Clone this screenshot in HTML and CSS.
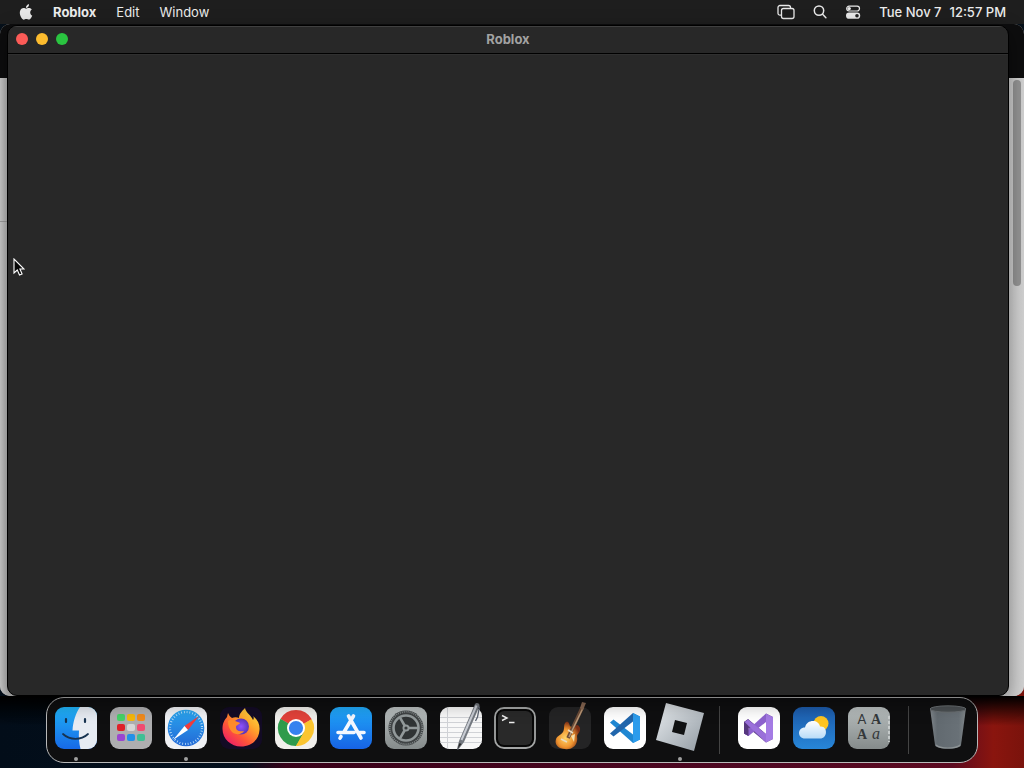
FILE: index.html
```
<!DOCTYPE html>
<html lang="en">
<head>
    <meta charset="UTF-8">
    <meta name="viewport" content="width=device-width, initial-scale=1.0">
    <title>Roblox</title>
    <link rel="stylesheet" href="styles.css">
</head>
<body>
    <header class="menubar">
        <nav class="menus">
            <button class="apple" aria-label="Apple menu">
                <svg width="14" height="16" viewBox="0 0 22 24"><path fill="#e8e8e8" d="M11.152 6.896c-.948 0-2.415-1.078-3.96-1.04-2.04.027-3.91 1.183-4.961 3.014-2.117 3.675-.546 9.103 1.519 12.09 1.013 1.454 2.208 3.09 3.792 3.039 1.52-.065 2.09-.987 3.935-.987 1.831 0 2.35.987 3.96.948 1.637-.026 2.676-1.48 3.676-2.948 1.156-1.688 1.636-3.325 1.662-3.415-.039-.013-3.182-1.221-3.22-4.857-.026-3.04 2.48-4.494 2.597-4.559-1.429-2.09-3.623-2.324-4.39-2.376-2-.156-3.675 1.09-4.61 1.09zM14.53 3.83c.843-1.012 1.4-2.427 1.245-3.83-1.207.052-2.662.805-3.532 1.818-.78.896-1.454 2.338-1.273 3.714 1.338.104 2.715-.688 3.56-1.702z"/></svg>
            </button>
            <button class="app-name">Roblox</button>
            <button>Edit</button>
            <button>Window</button>
        </nav>
        <div class="status">
            <button aria-label="Screen mirroring">
                <svg width="18" height="16" viewBox="0 0 18 16" fill="none" stroke="#e8e8e8" stroke-width="1.3"><path d="M4 11.2H3a2 2 0 0 1-2-2V3.500a2 2 0 0 1 2-2h8.500a2 2 0 0 1 2 2V4"/><rect x="4.500" y="4.500" width="12.500" height="10" rx="2"/></svg>
            </button>
            <button aria-label="Search">
                <svg width="14" height="16" viewBox="0 0 14 16" fill="none" stroke="#e8e8e8" stroke-width="1.5" stroke-linecap="round"><circle cx="6" cy="6.6" r="4.7"/><path d="M9.6 10.3l3.3 3.5"/></svg>
            </button>
            <button aria-label="Control Center">
                <svg width="16" height="16" viewBox="0 0 16 16"><rect x="1.7" y="2.2" width="12.8" height="4.8" rx="2.4" fill="none" stroke="#e8e8e8" stroke-width="1.2"/><circle cx="4.2" cy="4.6" r="1.7" fill="#e8e8e8"/><rect x="1" y="8.6" width="14.2" height="6.2" rx="3.1" fill="#e8e8e8"/><circle cx="12" cy="11.7" r="1.8" fill="#222"/></svg>
            </button>
            <button class="clock"><span>Tue Nov 7</span><span>12:57 PM</span></button>
        </div>
    </header>

    <main class="desktop">
        <div class="back-window">
            <div class="back-toolbar"></div>
            <div class="back-content"><div class="back-section"></div><div class="scroll-thumb"></div></div>
        </div>
        <section class="window" aria-labelledby="window-title">
            <div class="titlebar">
                <div class="lights">
                    <button class="light close" aria-label="Close"></button>
                    <button class="light minimize" aria-label="Minimize"></button>
                    <button class="light zoom" aria-label="Zoom"></button>
                </div>
                <h1 id="window-title">Roblox</h1>
            </div>
            <div class="window-content"></div>
        </section>
        <svg class="cursor" width="12" height="18" viewBox="0 0 12 18"><path d="M1 1v14l3.3-3 2.2 5 2.6-1.1-2.2-4.9H11z" fill="#080808" stroke="#fff" stroke-width="1.1"/></svg>
    </main>

    <footer class="dock-area">
        <nav class="dock" aria-label="Dock">
            <button class="dock-item running" aria-label="Finder">
                <svg viewBox="0 0 48 48">
                    <defs>
                        <linearGradient id="finder-blue" x2="0" y2="1"><stop stop-color="#20b3f7"/><stop offset="1" stop-color="#1769e6"/></linearGradient>
                        <clipPath id="tile"><rect x="3" y="3" width="42" height="42" rx="9"/></clipPath>
                    </defs>
                    <g clip-path="url(#tile)">
                        <path fill="url(#finder-blue)" d="M3 3h42v42H3z"/>
                        <path fill="#e6ebf2" d="M28 3c-4 6-7 14-7.500 23.500H27C26.500 33 27 39 28.500 45H45V3z"/>
                        <path d="M14 15v3M33 15v3" stroke="#173350" stroke-width="2.200" stroke-linecap="round"/>
                        <path d="M11 30c7 6.500 18 6.500 25 0" fill="none" stroke="#173350" stroke-width="1.800" stroke-linecap="round"/>
                    </g>
                </svg>
            </button>
            <button class="dock-item" aria-label="Launchpad">
                <svg viewBox="0 0 48 48">
                    <rect x="3" y="3" width="42" height="42" rx="9" fill="#aeaeb0"/>
                    <g>
                        <rect x="10" y="10" width="8" height="7" rx="2" fill="#45d267"/><rect x="20" y="10" width="8" height="7" rx="2" fill="#f5b70c"/><rect x="30" y="10" width="8" height="7" rx="2" fill="#f08a1c"/>
                        <rect x="10" y="20" width="8" height="7" rx="2" fill="#df2029"/><rect x="20" y="20" width="8" height="7" rx="2" fill="#d6d6d6"/><rect x="30" y="20" width="8" height="7" rx="2" fill="#f04b70"/>
                        <rect x="10" y="30" width="8" height="7" rx="2" fill="#9a46d0"/><rect x="20" y="30" width="8" height="7" rx="2" fill="#2290e8"/><rect x="30" y="30" width="8" height="7" rx="2" fill="#3dbf94"/>
                    </g>
                </svg>
            </button>
            <button class="dock-item running" aria-label="Safari">
                <svg viewBox="0 0 48 48">
                    <defs><linearGradient id="safari-blue" x2="0" y2="1"><stop stop-color="#2aa6ef"/><stop offset="1" stop-color="#2369d6"/></linearGradient></defs>
                    <rect x="3" y="3" width="42" height="42" rx="9" fill="#f0f1f4"/>
                    <circle cx="24" cy="24" r="18.300" fill="url(#safari-blue)"/>
                    <circle cx="24" cy="24" r="16" fill="none" stroke="#c3e3fa" stroke-width="2.200" stroke-dasharray=".8 2"/>
                    <path fill="#f03c3c" d="M37 12L22.500 22l3.500 4z"/>
                    <path fill="#fff" d="M11 36l11.500-14 3.500 4z"/>
                </svg>
            </button>
            <button class="dock-item" aria-label="Firefox">
                <svg viewBox="0 0 48 48">
                    <defs>
                        <linearGradient id="fox" x1="1" y1="0" x2=".2" y2="1"><stop stop-color="#fff04a"/><stop offset=".4" stop-color="#ffa52b"/><stop offset=".7" stop-color="#ff5538"/><stop offset="1" stop-color="#ec1a6b"/></linearGradient>
                        <radialGradient id="globe"><stop stop-color="#8f53ff"/><stop offset="1" stop-color="#5a35b5"/></radialGradient>
                    </defs>
                    <rect x="3" y="3" width="42" height="42" rx="9" fill="#130b25"/>
                    <path fill="url(#fox)" d="M28 4c1 5 6 7 8 12 1-1 1-3 0-4 5 4 7 9 6.500 14C42 36 34 42.500 24 42.500S5.500 35 5.500 25c0-6 2-9 4.500-12l1-4c1 2 2 4 4 5 2-1 5-1 7 0 0-4 3-7 6-10z"/>
                    <circle cx="24" cy="22.500" r="8" fill="url(#globe)"/>
                    <path fill="#ff8b2b" d="M11 17c3-2 5-2 7 0 2 1 4 1 5 2-1 2-4 2-4 4 0 4 4 5 8 4-2 4-9 4-12 1-3-3-4-7-4-11z"/>
                </svg>
            </button>
            <button class="dock-item" aria-label="Chrome">
                <svg viewBox="0 0 48 48">
                    <rect x="3" y="3" width="42" height="42" rx="9" fill="#f1f0ec"/>
                    <path fill="#e2423a" d="M24 24L8.400 15A18 18 0 0 1 39.600 15z"/>
                    <path fill="#2f9b4c" d="M24 24v18A18 18 0 0 1 8.400 15z"/>
                    <path fill="#fbc530" d="M24 24l15.600-9A18 18 0 0 1 24 42z"/>
                    <path fill="#e2423a" d="M24 15h15.600L24 24z"/>
                    <path fill="#2f9b4c" d="M8.400 15l7.800 13.500L24 24z"/>
                    <path fill="#fbc530" d="M24 42l7.800-13.500L24 24z"/>
                    <path fill="#2f9b4c" d="M16.200 28.500L24 42l7.800-13.500z"/>
                    <path fill="#fbc530" d="M31.800 28.500L24 42h2l12-10V20z"/>
                    <circle cx="24" cy="24" r="9" fill="#fff"/><circle cx="24" cy="24" r="7.100" fill="#3682ef"/>
                </svg>
            </button>
            <button class="dock-item" aria-label="App Store">
                <svg viewBox="0 0 48 48">
                    <defs><linearGradient id="store-blue" x2="0" y2="1"><stop stop-color="#20a9f8"/><stop offset="1" stop-color="#1763e5"/></linearGradient></defs>
                    <rect x="3" y="3" width="42" height="42" rx="9" fill="url(#store-blue)"/>
                    <path d="M21.500 12l12.500 22M26.500 12L17 28M14 32.500L13 34.200M11 28.500h16M32.500 28.500H37" fill="none" stroke="#f4f8ff" stroke-width="3.600" stroke-linecap="round"/>
                </svg>
            </button>
            <button class="dock-item" aria-label="System Settings">
                <svg viewBox="0 0 48 48">
                    <defs><linearGradient id="silver" x2="0" y2="1"><stop stop-color="#b9bfbf"/><stop offset="1" stop-color="#858b8b"/></linearGradient></defs>
                    <rect x="3" y="3" width="42" height="42" rx="9" fill="url(#silver)"/>
                    <circle cx="24" cy="24" r="17.500" fill="#3f4344"/>
                    <circle cx="24" cy="24" r="16.300" fill="none" stroke="#858b8c" stroke-width="1.800" stroke-dasharray="1 1"/>
                    <circle cx="24" cy="24" r="12.500" fill="#303435" stroke="#92999a" stroke-width="2.600"/>
                    <path d="M24 24h12M24 24l-6-10.400M24 24l-6 10.400" stroke="#92999a" stroke-width="2.600"/>
                    <circle cx="24" cy="24" r="3.500" fill="#92999a"/><circle cx="24" cy="24" r="1.600" fill="#363a3b"/>
                </svg>
            </button>
            <button class="dock-item" aria-label="TextEdit">
                <svg viewBox="0 0 48 48">
                    <rect x="3" y="3" width="42" height="42" rx="9" fill="#f8f8f8"/>
                    <g clip-path="url(#tile)"><path d="M3 13.500h42M3 18.500h42M3 23.500h42M3 28.500h42M3 33.500h42M3 38.500h42M10.500 3v42" stroke="#d0d2d6"/></g>
                    <path fill="#747980" d="M38 0c1.500-2 5-.5 4.500 2L27 38l-6 8-1-1 2-8z"/>
                    <path d="M39.500 1.500L24.500 36" stroke="#c9cdd4" stroke-width="2"/>
                    <path d="M42.500 2.500L40.500 13l-2 4" fill="none" stroke="#5d6573" stroke-width="1.300"/>
                    <path fill="#292929" d="M22.500 39l2 1-4 5z"/>
                </svg>
            </button>
            <button class="dock-item" aria-label="Terminal">
                <svg viewBox="0 0 48 48">
                    <rect x="4" y="4" width="40" height="40" rx="9" fill="#070707" stroke="#a4a6a6" stroke-width="1.800"/>
                    <rect x="7" y="7" width="34" height="34" rx="6" fill="#292929"/>
                    <path d="M11 11.500l5 2.500-5 2.500M18 18.500h5.500" fill="none" stroke="#eee" stroke-width="1.400"/>
                </svg>
            </button>
            <button class="dock-item" aria-label="GarageBand">
                <svg viewBox="0 0 48 48">
                    <defs><radialGradient id="guitar" cx=".4" cy=".6" r=".6"><stop stop-color="#ffd66a"/><stop offset=".55" stop-color="#ee932f"/><stop offset="1" stop-color="#7c2d14"/></radialGradient></defs>
                    <rect x="3" y="3" width="42" height="42" rx="9" fill="#242425"/>
                    <path fill="url(#guitar)" d="M20 18c3-1 3 2 4 4 2 2 5 0 7-1 4 1 4 6 1 9-2 2 0 4-1 7-1 6-7 9-12 8-6 0-11-4-9-10 1-3 5-4 7-7 2-3 0-8 3-10z"/>
                    <path d="M22 34L36 4" stroke="#6b4b38" stroke-width="3.600"/>
                    <path d="M23 33L37 4" stroke="#b99978" stroke-width="1.500"/>
                    <path fill="#8a6953" d="M34 4l2-6 4 1-3 7z"/>
                    <path d="M15 35l6 3M22 26l5 3" stroke="#e8dcc4" stroke-width="1.600"/>
                    <path fill="#f5dfac" d="M25 32l4-2-1 8z"/>
                </svg>
            </button>
            <button class="dock-item" aria-label="Visual Studio Code">
                <svg viewBox="0 0 48 48">
                    <rect x="3" y="3" width="42" height="42" rx="9" fill="#fff"/>
                    <path fill="#1f87d2" d="M32 9l7 3.500v23L32 39 9 18.500l3.500-3L32 30.500z"/>
                    <path fill="#2166ac" d="M9 29.500L32 9v8.500L12.500 32.500z"/>
                    <path fill="#2c9cec" d="M32 9l7 3.500v23L32 39z"/>
                </svg>
            </button>
            <button class="dock-item running" aria-label="Roblox">
                <svg viewBox="0 0 48 48">
                    <defs><linearGradient id="steel" x2="1" y2="1"><stop stop-color="#e9edf0"/><stop offset="1" stop-color="#929ba3"/></linearGradient></defs>
                    <path fill="url(#steel)" d="M10-1L48 9 38 47 0 36z"/>
                    <path fill="#101112" d="M19 16l12 3-3 12-12-3z"/>
                </svg>
            </button>
            <span class="divider"></span>
            <button class="dock-item" aria-label="Visual Studio">
                <svg viewBox="0 0 48 48">
                    <rect x="3" y="3" width="42" height="42" rx="9" fill="#fff"/>
                    <path fill="#63458f" d="M9 18l4-3 18 15V9.500L38 13v22l-7 3.500L13.500 24v8L9 29.500z"/>
                    <path fill="#8d62ce" d="M9 29.500L31 9.500V18L13.500 32z"/>
                    <path fill="#56377e" d="M9 18l4.500-2.500v16.500L9 29.500z"/>
                    <path fill="#a47be4" d="M31 9.500l7 3.500v22l-7 3.500z"/>
                    <path fill="#9a70da" d="M13 15.500L31 30v8.500L9.500 18z"/>
                </svg>
            </button>
            <button class="dock-item" aria-label="Weather">
                <svg viewBox="0 0 48 48">
                    <defs><linearGradient id="sky" x2="0" y2="1"><stop stop-color="#1c5aa9"/><stop offset="1" stop-color="#2786d8"/></linearGradient>
                    <linearGradient id="cloud" x2="0" y2="1"><stop stop-color="#fff"/><stop offset="1" stop-color="#b9dcf8"/></linearGradient></defs>
                    <rect x="3" y="3" width="42" height="42" rx="9" fill="url(#sky)"/>
                    <circle cx="31" cy="19.500" r="7.500" fill="#fdc522"/>
                    <path fill="url(#cloud)" d="M15 34.500c-8 0-8-11 0-11 2-9 14-8 15-1 8-1 8 12 0 12z"/>
                </svg>
            </button>
            <button class="dock-item" aria-label="Font Book">
                <svg viewBox="0 0 48 48">
                    <rect x="3" y="3" width="42" height="42" rx="9" fill="url(#silver)"/>
                    <path d="M44 12v26" stroke="#d3d7d7" stroke-width="1.500" stroke-dasharray="3 2"/>
                    <g fill="#34383a" text-anchor="middle" font-size="14">
                        <text x="17" y="20" font-family="Lato, sans-serif" font-size="13">A</text>
                        <text x="31" y="20" font-family="Liberation Serif, serif" font-weight="bold">A</text>
                        <text x="17" y="35" font-family="Liberation Serif, serif" font-weight="bold">A</text>
                        <text x="31" y="35" font-family="Liberation Serif, serif" font-style="italic" font-size="16">a</text>
                    </g>
                </svg>
            </button>
            <span class="divider"></span>
            <button class="dock-item" aria-label="Trash">
                <svg viewBox="0 0 48 48">
                    <defs><linearGradient id="bin"><stop stop-color="#80868b"/><stop offset=".2" stop-color="#626a70"/><stop offset=".8" stop-color="#697177"/><stop offset="1" stop-color="#82888b"/></linearGradient></defs>
                    <path fill="url(#bin)" d="M6 4l5 37c1 5 25 5 26 0l5-37z"/>
                    <ellipse cx="24" cy="5" rx="18" ry="3.200" fill="#4b5053" stroke="#6b7073"/>
                    <path d="M12 41c4 4 20 4 24 0" fill="none" stroke="#8d9395" stroke-width="1.200"/>
                </svg>
            </button>
        </nav>
    </footer>
</body>
</html>
```
FILE: styles.css
```
* {
    box-sizing: border-box;
}
body {
    display: flex;
    flex-direction: column;
    height: 100vh;
    margin: 0;
    overflow: hidden;
    font-family: Inter, sans-serif;
    font-size: 13px;
    color: #ececec;
    background: linear-gradient(90deg, #020d19 0%, #04101d 24%, #380018 28%, #500822 75%, #5c0a20 93%, #8a150e 97%, #7a130c 100%);
}
button {
    display: flex;
    align-items: center;
    padding: 0;
    border: none;
    background: none;
    color: inherit;
    font: inherit;
}
/* Menu bar */
.menubar {
    display: flex;
    justify-content: space-between;
    height: 24px;
    padding: 0 18px 1px 19px;
    background: #1e1e1e;
}
.menus,
.status {
    display: flex;
    align-items: center;
    gap: 20px;
}
.status {
    gap: 18px;
}
.menubar .app-name {
    font-weight: 700;
}
.menubar .clock {
    gap: 8px;
    font-weight: 500;
}
/* Windows */
.desktop {
    position: relative;
    display: flex;
    flex: 1;
    padding: 1px 15px 0 7px;
    background: linear-gradient(#06101a 40px, transparent 40px);
}
.back-window {
    position: absolute;
    inset: 0;
    display: flex;
    flex-direction: column;
    overflow: hidden;
    border-radius: 10px;
    background: #bdbdbd;
}
.back-toolbar {
    height: 54px;
    background: #0d0d0e;
}
.back-content {
    display: flex;
    flex: 1;
    align-items: flex-start;
    justify-content: space-between;
    padding-right: 3px;
    background: linear-gradient(90deg, #d0d0d0, #bcbcbc 7px, #c4c4c4 90%, #d2d2d2);
}
.back-section {
    width: 8px;
    height: 144px;
    border-bottom: 1px solid #a0a0a0;
}
.scroll-thumb {
    width: 8px;
    height: 206px;
    margin-top: 2px;
    border-radius: 4px;
    background: #949494;
}
.window {
    position: relative;
    display: flex;
    flex: 1;
    flex-direction: column;
    border: 1px solid #000;
    border-radius: 10px;
    background: #282828;
    box-shadow: 0 6px 20px rgba(0, 0, 0, 0.4);
    overflow: hidden;
}
.titlebar {
    display: grid;
    grid-template-columns: 1fr auto 1fr;
    align-items: center;
    height: 28px;
    padding: 0 8px 2px;
    border-top: 1px solid #404040;
    border-bottom: 1px solid #000;
}
.titlebar h1 {
    margin: 0;
    font-size: 13px;
    font-weight: 700;
    color: #a2a2a2;
}
.lights {
    display: flex;
    gap: 8px;
}
.light {
    width: 12px;
    height: 12px;
    border-radius: 50%;
}
.close {
    background: #fc5b57;
}
.minimize {
    background: #fdbc2e;
}
.zoom {
    background: #2ac440;
}
.window-content {
    flex: 1;
    border-top: 1px solid #303030;
}
.cursor {
    position: absolute;
    top: 234px;
    left: 13px;
}
/* Dock */
.dock-area {
    padding: 1px 46px 5px;
    background: linear-gradient(#000, transparent 30px);
}
.dock {
    display: flex;
    height: 66px;
    padding: 0 2px;
    border: 1px solid #b9b9b9;
    border-radius: 18px;
    background: #0f0f10;
}
.dock-item {
    display: flex;
    flex: 1;
    flex-direction: column;
    justify-content: flex-start;
    padding-top: 6px;
}
.dock-item svg {
    width: 48px;
    height: 48px;
    overflow: visible;
}
.running::after {
    content: "";
    width: 4px;
    height: 4px;
    margin-top: 5px;
    border-radius: 50%;
    background: #a0a0a0;
}
.divider {
    width: 24px;
    margin: 8px 0;
    background: linear-gradient(#444, #444) center / 1px 100% no-repeat;
}
```
